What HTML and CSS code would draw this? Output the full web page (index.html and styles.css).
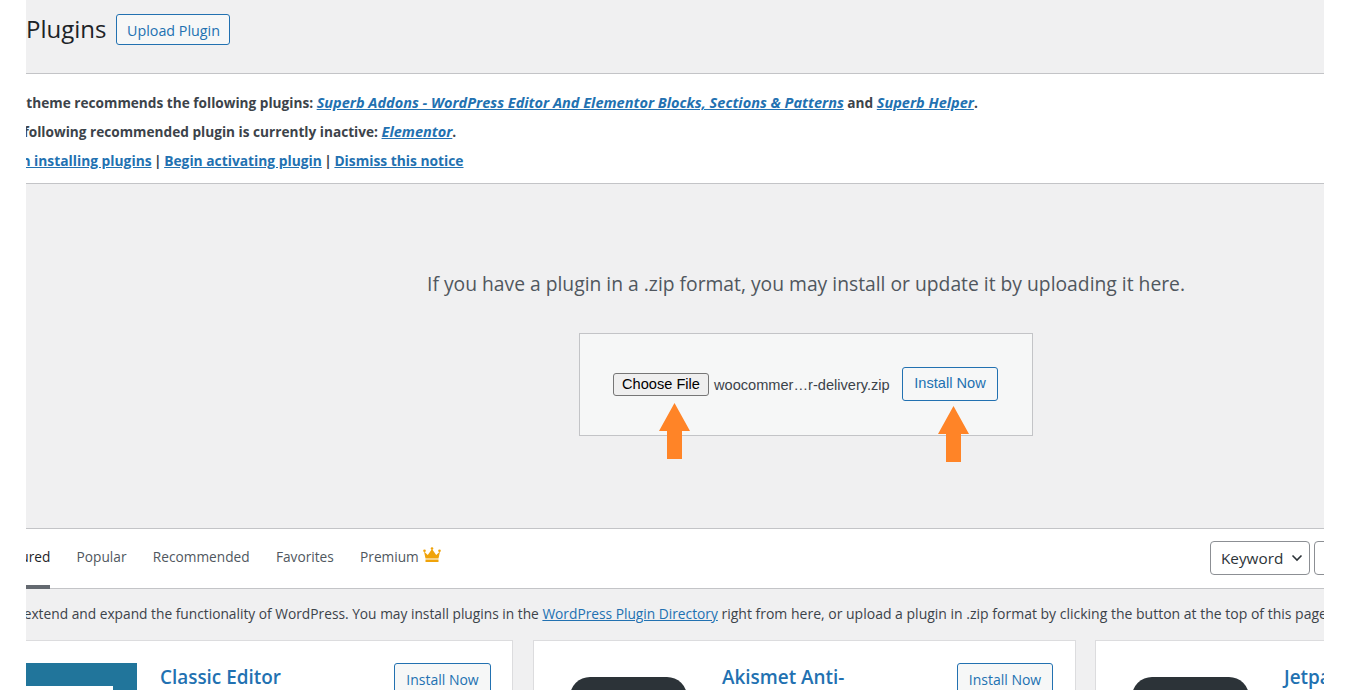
FILE: index.html
```html
<!DOCTYPE html>
<html lang="en">
<head>
<meta charset="utf-8">
<title>Add Plugins</title>
<link rel="stylesheet" href="styles.css">
</head>
<body>
<main class="stage">
  <header class="head">
    <h1 class="title">Plugins</h1>
    <a class="btn upload-btn" href="#">Upload Plugin</a>
  </header>
  <section class="notice">
    <p class="line">This theme recommends the following plugins: <a class="em" href="#">Superb Addons - WordPress Editor And Elementor Blocks, Sections &amp; Patterns</a> and <a class="em" href="#">Superb Helper</a>.</p>
    <p class="line">The following recommended plugin is currently inactive: <a class="em" href="#">Elementor</a>.</p>
    <p class="line line-actions"><a href="#">Begin installing plugins</a> <span class="sep">|</span> <a href="#">Begin activating plugin</a> <span class="sep">|</span> <a href="#">Dismiss this notice</a></p>
  </section>
  <section class="upload">
    <p class="help">If you have a plugin in a .zip format, you may install or update it by uploading it here.</p>
    <div class="form-wrap">
      <form class="form">
        <div class="file">
          <span class="file-btn">Choose File</span>
          <span class="file-name">woocommer…r-delivery.zip</span>
        </div>
        <a class="btn install-main" href="#">Install Now</a>
        <svg class="arrow arrow-a" viewBox="0 0 31 56" width="31" height="56"><path d="M15.5 0 31 28H23V56H8V28H0Z" fill="#ff8427"/></svg>
        <svg class="arrow arrow-b" viewBox="0 0 31 56" width="31" height="56"><path d="M15.5 0 31 28H23V56H8V28H0Z" fill="#ff8427"/></svg>
      </form>
    </div>
  </section>
  <nav class="tabs">
    <ul class="tab-list">
      <li class="tab current">Featured</li>
      <li class="tab">Popular</li>
      <li class="tab">Recommended</li>
      <li class="tab">Favorites</li>
      <li class="tab">Premium <svg class="crown" viewBox="0 0 18 16" width="18" height="16"><path d="M1 4.5 4.8 8 9 2l4.200 6L17 4.500 15.500 11.500H2.500Z" fill="#f0a30a"/><circle cx="1.500" cy="3.800" r="1.300" fill="#f0a30a"/><circle cx="9" cy="1.500" r="1.300" fill="#f0a30a"/><circle cx="16.500" cy="3.800" r="1.300" fill="#f0a30a"/><rect x="2.500" y="12.500" width="13" height="2.500" fill="#f0a30a"/></svg></li>
    </ul>
    <div class="search">
      <span class="select">Keyword <svg class="chev" viewBox="0 0 12 8" width="12" height="8"><path d="M1.500 1.500 6 6l4.500-4.500" fill="none" stroke="#2c3338" stroke-width="1.600"/></svg></span>
      <span class="search-input"></span>
    </div>
  </nav>
  <p class="desc">Plugins extend and expand the functionality of WordPress. You may install plugins in the <a href="#">WordPress Plugin Directory</a> <span class="desc-tail">right from here, or upload a plugin in .zip format by clicking the button at the top of this page.</span></p>
  <section class="cards">
    <article class="card">
      <div class="thumb thumb-blue"><span class="thumb-inner"></span></div>
      <h3 class="name">Classic Editor</h3>
      <a class="btn card-btn" href="#">Install Now</a>
    </article>
    <article class="card">
      <div class="thumb thumb-dark"></div>
      <h3 class="name">Akismet Anti-Spam</h3>
      <a class="btn card-btn" href="#">Install Now</a>
    </article>
    <article class="card">
      <div class="thumb thumb-dark"></div>
      <h3 class="name">Jetpack</h3>
      <a class="btn card-btn" href="#">Install Now</a>
    </article>
  </section>
</main>
</body>
</html>
```
FILE: styles.css
```css
* { box-sizing: border-box; }
html, body { margin: 0; height: 100%; overflow: hidden; background: #fff; }
body { font-family: "Open Sans", "Noto Sans", sans-serif; color: #3c434a; }
a { color: #2271b1; }
.stage { width: 1298px; height: 690px; margin-left: 26px; overflow: hidden; background: #f0f0f1; position: relative; }
.head { height: 74px; border-bottom: 1px solid #c3c4c7; display: flex; align-items: flex-start; padding-top: 14px; gap: 10px; }
.title { margin: 0; font-size: 24px; font-weight: 400; line-height: 30px; color: #1d2327; letter-spacing: 0; }
.btn { display: block; text-decoration: none; color: #2271b1; border: 1px solid #2271b1; border-radius: 3px; background: #f6f7f7; font-size: 14px; text-align: center; }
.upload-btn { width: 114px; height: 31px; line-height: 31px; font-size: 14.3px; }
.notice { height: 110px; background: #fff; border-bottom: 1px solid #c3c4c7; padding-top: 19px; white-space: nowrap; }
.line { margin: 0 0 9px -31px; height: 20px; font-size: 13.65px; line-height: 20px; font-weight: 700; }
.line a { line-height: 1; }
.line .em { font-size: 14.53px; }
.em { font-style: italic; }
.line-actions { margin-left: -34px; }
.line-actions a { font-size: 13.8px; }
.sep { margin: 0 -1px; }
.upload { height: 345px; border-bottom: 1px solid #c3c4c7; padding: 86px 0 0 262px; display: flex; flex-direction: column; align-items: center; }
.help { margin: 0; font-size: 19.3px; line-height: 28px; color: #50575e; white-space: nowrap; }
.form-wrap { margin-top: 35px; }
.form { width: 454px; height: 103px; border: 1px solid #c3c4c7; background: #f6f7f7; display: flex; align-items: center; padding: 0 34px 0 33px; position: relative; }
.file { display: flex; align-items: center; font-family: "Liberation Sans", Arial, sans-serif; font-size: 14.6px; }
.file-btn { width: 96px; height: 23px; border: 1px solid #767676; border-radius: 3px; background: #efefef; color: #000; text-align: center; line-height: 21px; }
.file-name { margin-left: 5px; color: #3c434a; }
.install-main { margin: -1px 0 0 auto; width: 96px; height: 34px; line-height: 30px; font-family: "Liberation Sans", Arial, sans-serif; font-size: 14.6px; }
.arrow { position: absolute; }
.arrow-a { left: 79px; top: 69px; }
.arrow-b { left: 358px; top: 72px; }
.tabs { height: 60px; background: #fff; border-bottom: 1px solid #c3c4c7; display: flex; justify-content: space-between; }
.tab-list { list-style: none; margin: 0 0 0 -33px; padding: 0; display: flex; gap: 26.3px; font-size: 13.7px; color: #50575e; }
.tab { height: 60px; line-height: 56px; display: flex; align-items: flex-start; gap: 4px; }
.tab.current { color: #1d2327; border-bottom: 4px solid #646970; }
.crown { margin-top: 18px; }
.search { display: flex; gap: 4px; padding-top: 12px; margin-right: -50px; }
.select { width: 100px; height: 34px; border: 1px solid #8c8f94; border-radius: 4px; font-size: 15.3px; line-height: 32px; padding-left: 10px; color: #2c3338; display: flex; align-items: center; gap: 8px; }
.search-input { width: 60px; height: 34px; border: 1px solid #8c8f94; border-radius: 4px; background: #fff; }
.desc { margin: 15px 0 0 -52px; font-size: 13.75px; line-height: 20px; white-space: nowrap; }
.desc-tail { font-size: 14px; }
.cards { display: flex; gap: 19px; margin: 16px 0 0 -30px; }
.card { flex: none; width: 517px; height: 200px; background: #fff; border: 1px solid #dcdcde; position: relative; display: flex; align-items: flex-start; padding: 22px 22px 0 36px; }
.card:nth-child(2) { width: 543px; margin-left: 1px; }
.thumb { width: 128px; height: 128px; flex: none; }
.thumb-blue { background: #21759b; padding: 23px 24px 0 0; margin-left: -24px; }
.thumb-inner { display: block; height: 80px; background: #fff; }
.thumb-dark { background: #2c3338; border-radius: 20px; margin-top: 14px; width: 117px; }
.name { margin: 1px 0 0 23px; font-size: 18.9px; line-height: 26px; font-weight: 600; color: #2271b1; width: 155px; }
.card:nth-child(2) .name { margin-left: 35px; }
.card:nth-child(3) .name { margin-left: 35px; }
.card-btn { position: absolute; right: 22px; top: 22px; width: 97px; height: 34px; line-height: 32px; }
.card:first-child .card-btn { right: 21px; }
.card:nth-child(2) .card-btn { width: 96px; }
```
